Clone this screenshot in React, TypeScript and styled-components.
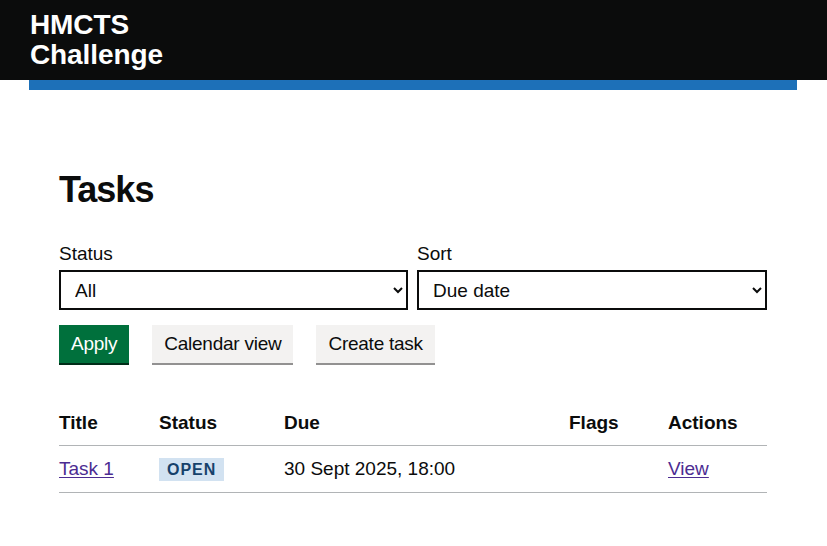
import React from "react";
import styled, { createGlobalStyle } from "styled-components";

const GlobalStyle = createGlobalStyle`
  *, *::before, *::after { box-sizing: border-box; }
  html, body { margin: 0; padding: 0; background: #ffffff; }
  body {
    font-family: "Liberation Sans", Arial, sans-serif;
    color: #0b0c0c;
    -webkit-font-smoothing: antialiased;
  }
`;

const Header = styled.header`
  background: #0b0c0c;
  color: #ffffff;
`;

const HeaderInner = styled.div`
  margin: 0 30px 0 29px;
  padding: 10px 0 10px 1px;
  height: 80px;
`;

const Logotype = styled.a`
  display: block;
  color: #ffffff;
  text-decoration: none;
  font-weight: 700;
  font-size: 28px;
  line-height: 30px;
  letter-spacing: -0.1px;
`;

const BlueBar = styled.div`
  margin: 0 30px 0 29px;
  height: 10px;
  background: #1d70b8;
`;

const Main = styled.main`
  margin: 0 30px 0 29px;
  padding: 80px 30px 0 30px;
`;

const Heading = styled.h1`
  margin: 0 0 31px;
  font-size: 36px;
  line-height: 40px;
  font-weight: 700;
  letter-spacing: -1px;
`;

const Filters = styled.form`
  display: grid;
  grid-template-columns: 349px 350px;
  column-gap: 9px;
`;

const Field = styled.div`
  display: flex;
  flex-direction: column;
`;

const Label = styled.label`
  font-size: 19px;
  line-height: 25px;
  margin-bottom: 4px;
`;

const Select = styled.select`
  height: 40px;
  width: 100%;
  padding: 5px 8px 5px 10px;
  border: 2px solid #0b0c0c;
  border-radius: 0;
  background: #ffffff;
  color: #0b0c0c;
  font-family: "Liberation Sans", Arial, sans-serif;
  font-size: 19px;
`;

const ButtonRow = styled.div`
  display: flex;
  gap: 23px;
  margin-top: 15px;
  grid-column: 1 / -1;
`;

const Button = styled.button<{ $primary?: boolean }>`
  height: 38px;
  padding: 0 12px;
  border: 0;
  border-radius: 0;
  font-family: "Liberation Sans", Arial, sans-serif;
  font-size: 19px;
  line-height: 38px;
  cursor: pointer;
  background: ${(p) => (p.$primary ? "#00703c" : "#f3f2f1")};
  color: ${(p) => (p.$primary ? "#ffffff" : "#0b0c0c")};
  box-shadow: 0 2px 0 ${(p) => (p.$primary ? "#002d18" : "#929191")};
  letter-spacing: -0.25px;
`;

const Table = styled.table`
  margin-top: 37px;
  width: 708px;
  border-collapse: collapse;
  table-layout: fixed;
  font-size: 19px;
  line-height: 25px;
`;

const Th = styled.th<{ $w: number }>`
  width: ${(p) => p.$w}px;
  text-align: left;
  font-weight: 700;
  padding: 10px 20px 10px 0;
  border-bottom: 1px solid #b1b4b6;
  &:last-child { padding-right: 0; }
`;

const Td = styled.td`
  padding: 10px 20px 11px 0;
  border-bottom: 1px solid #b1b4b6;
  vertical-align: top;
  &:last-child { padding-right: 0; }
`;

const Link = styled.a`
  color: #4c2c92;
  text-decoration: underline;
  text-decoration-thickness: 1px;
  text-underline-offset: 0.12em;
`;

const Tag = styled.strong`
  display: inline-block;
  margin-top: 2px;
  padding: 4px 8px 3px;
  background: #d2e2f1;
  color: #16416b;
  font-size: 16px;
  line-height: 16px;
  font-weight: 700;
  letter-spacing: 1px;
  text-transform: uppercase;
  vertical-align: top;
`;

const columns: Array<[string, number]> = [
  ["Title", 100],
  ["Status", 125],
  ["Due", 285],
  ["Flags", 99],
  ["Actions", 99],
];

export default function App() {
  return (
    <>
      <GlobalStyle />
      <Header>
        <HeaderInner>
          <Logotype href="#">
            HMCTS
            <br />
            Challenge
          </Logotype>
        </HeaderInner>
      </Header>
      <BlueBar />
      <Main>
        <Heading>Tasks</Heading>
        <Filters onSubmit={(e) => e.preventDefault()}>
          <Field>
            <Label htmlFor="status">Status</Label>
            <Select id="status" defaultValue="all">
              <option value="all">All</option>
              <option value="open">Open</option>
              <option value="closed">Closed</option>
            </Select>
          </Field>
          <Field>
            <Label htmlFor="sort">Sort</Label>
            <Select id="sort" defaultValue="due">
              <option value="due">Due date</option>
              <option value="title">Title</option>
            </Select>
          </Field>
          <ButtonRow>
            <Button $primary type="submit">Apply</Button>
            <Button type="button">Calendar view</Button>
            <Button type="button">Create task</Button>
          </ButtonRow>
        </Filters>
        <Table>
          <thead>
            <tr>
              {columns.map(([name, w]) => (
                <Th key={name} $w={w}>
                  {name}
                </Th>
              ))}
            </tr>
          </thead>
          <tbody>
            <tr>
              <Td>
                <Link href="#">Task 1</Link>
              </Td>
              <Td>
                <Tag>Open</Tag>
              </Td>
              <Td>30 Sept 2025, 18:00</Td>
              <Td></Td>
              <Td>
                <Link href="#">View</Link>
              </Td>
            </tr>
          </tbody>
        </Table>
      </Main>
    </>
  );
}
